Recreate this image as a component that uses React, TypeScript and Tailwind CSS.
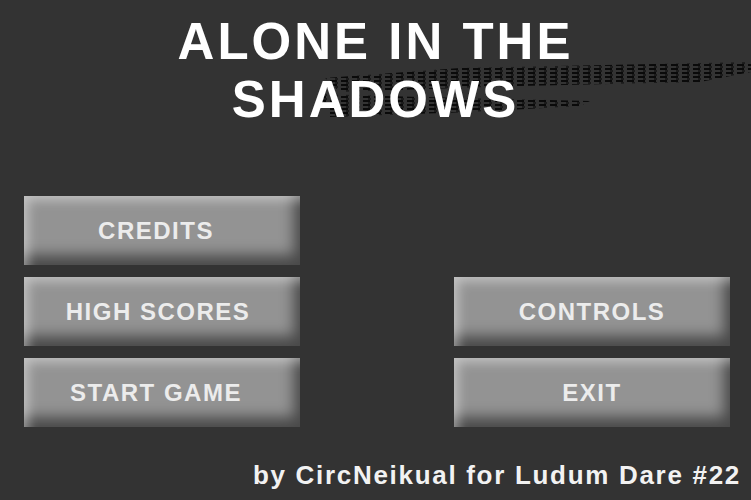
import React from "react";

const MenuButton: React.FC<{ label: string; className?: string }> = ({
  label,
  className = "",
}) => (
  <button
    className={`h-[69px] w-[276px] flex items-center justify-center bg-[#939393] text-[#ececec] text-[24px] font-bold tracking-[1.5px] font-['Liberation_Sans',Arial,sans-serif] shadow-[inset_10px_10px_12px_-6px_rgba(255,255,255,0.45),inset_-12px_-16px_14px_-6px_rgba(0,0,0,0.5)] ${className}`}
  >
    {label}
  </button>
);

const ShadowStreak: React.FC = () => (
  <svg
    className="absolute left-0 top-0 pointer-events-none"
    width="751"
    height="140"
    viewBox="0 0 751 140"
  >
    <defs>
      <pattern id="dash" width="11" height="4" patternUnits="userSpaceOnUse">
        <rect x="0" y="0" width="7" height="2" fill="#000" />
        <rect x="5" y="2" width="3" height="2" fill="#000" opacity="0.6" />
      </pattern>
    </defs>
    <polygon
      points="325,78 460,68 751,62 751,72 700,82 520,86 340,92"
      fill="url(#dash)"
      opacity="0.8"
    />
    <polygon
      points="320,94 420,97 590,101 580,106 470,112 330,117"
      fill="url(#dash)"
      opacity="0.8"
    />
  </svg>
);

export default function App() {
  return (
    <div className="relative w-[751px] h-[500px] bg-[#333333] overflow-hidden font-['Liberation_Sans',Arial,sans-serif]">
      <ShadowStreak />
      <h1 className="relative pt-[13px] text-center text-white font-bold text-[51px] leading-[58px] tracking-[3px]">
        ALONE IN THE
        <br />
        SHADOWS
      </h1>
      <div className="mt-[67px] pl-[24px] grid grid-cols-[276px_276px] gap-x-[154px] gap-y-[12px]">
        <MenuButton label="CREDITS" className="pr-[12px]" />
        <div />
        <MenuButton label="HIGH SCORES" className="pr-[8px]" />
        <MenuButton label="CONTROLS" />
        <MenuButton label="START GAME" className="pr-[12px]" />
        <MenuButton label="EXIT" />
      </div>
      <p className="mt-[33px] pr-[10px] text-right text-[#f2f2f2] font-bold text-[26px] leading-[30px] tracking-[1.7px]">
        by CircNeikual for Ludum Dare #22
      </p>
    </div>
  );
}
